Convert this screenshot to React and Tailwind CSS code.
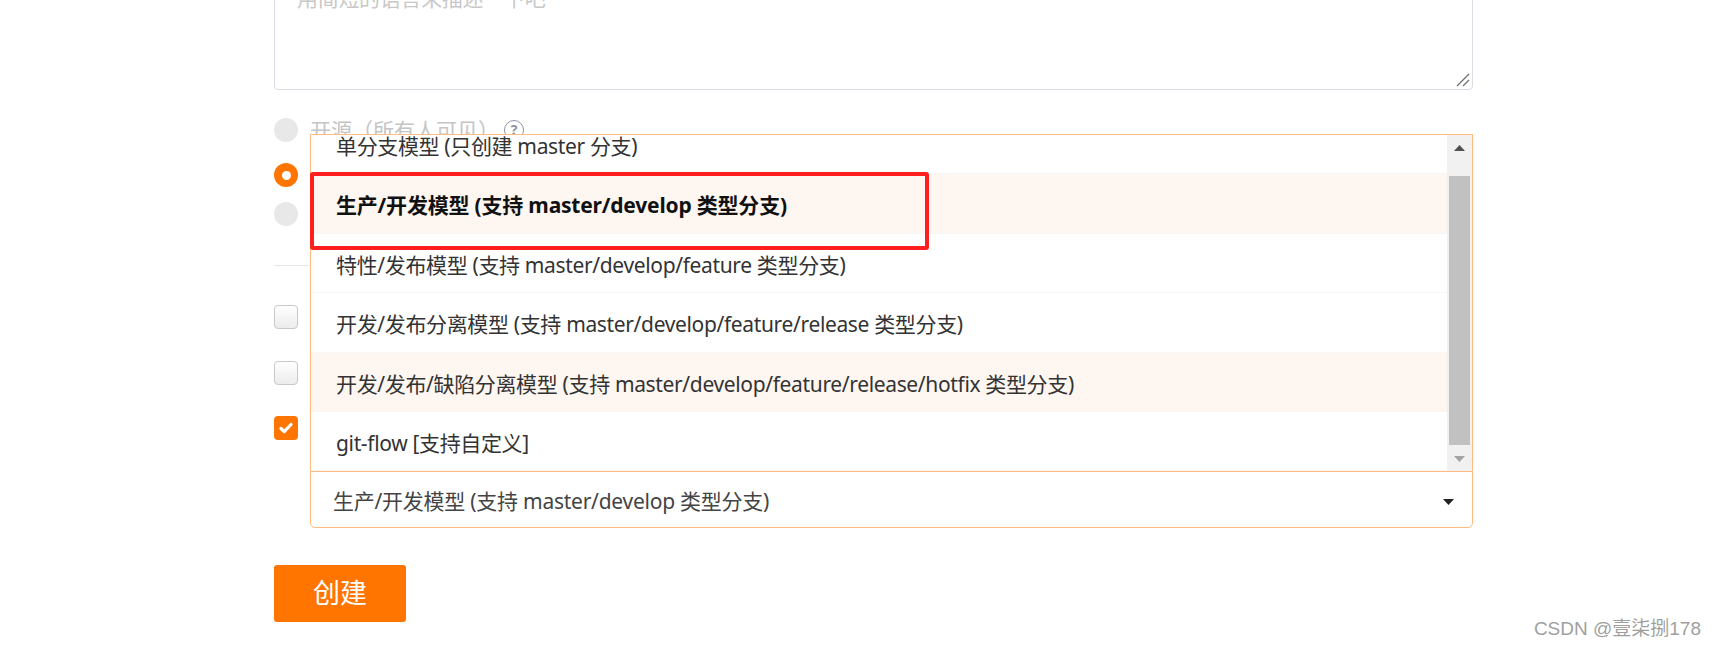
import React from 'react';

const options = [
  { label: '单分支模型 (只创建 master 分支)' },
  { label: '生产/开发模型 (支持 master/develop 类型分支)', active: true },
  { label: '特性/发布模型 (支持 master/develop/feature 类型分支)' },
  { label: '开发/发布分离模型 (支持 master/develop/feature/release 类型分支)' },
  { label: '开发/发布/缺陷分离模型 (支持 master/develop/feature/release/hotfix 类型分支)', tinted: true },
  { label: 'git-flow [支持自定义]' },
];

function Radio({ checked }) {
  if (checked) {
    return (
      <span className="flex h-6 w-6 shrink-0 items-center justify-center rounded-full bg-[#ff7500]">
        <span className="h-[9px] w-[9px] rounded-full bg-white" />
      </span>
    );
  }
  return <span className="h-6 w-6 shrink-0 rounded-full bg-[#e8e8e8]" />;
}

function Checkbox({ checked }) {
  if (checked) {
    return (
      <span className="flex h-6 w-6 shrink-0 items-center justify-center rounded-[4px] bg-[#ff7500]">
        <svg width="16" height="16" viewBox="0 0 16 16">
          <path d="M3 8.5l3.2 3.2L13 4.5" fill="none" stroke="#fff" strokeWidth="3.2" strokeLinecap="round" strokeLinejoin="round" />
        </svg>
      </span>
    );
  }
  return <span className="h-6 w-6 shrink-0 rounded-[4px] border border-[#c9c9c9] bg-gradient-to-b from-white to-[#ececec]" />;
}

function Triangle({ up, color }) {
  return (
    <svg width="11" height="6" viewBox="0 0 11 6">
      <path d={up ? 'M0 6L5.5 0L11 6Z' : 'M0 0L5.5 6L11 0Z'} fill={color} />
    </svg>
  );
}

export default function App() {
  return (
    <div className="relative h-[651px] w-full overflow-hidden bg-white font-[family-name:'Noto_Sans','Noto_Sans_CJK_SC',sans-serif]">
      <div className="ml-[274px] flex w-[1199px] flex-col">
        {/* Description textarea */}
        <div className="relative -mt-[40px] h-[130px] rounded-[4px] border border-[#dcdde4] pl-[22px] pt-[22px] text-[21px] leading-[30px] tracking-[-0.3px] text-[#c8c8c8]">
          用简短的语言来描述一下吧
          <svg className="absolute bottom-[2px] right-[2px]" width="14" height="14" viewBox="0 0 14 14">
            <path d="M1 13L13 1M7 13L13 7" stroke="#707070" strokeWidth="1.3" />
          </svg>
        </div>

        {/* Visibility */}
        <div className="mt-[28px] flex h-6 items-center">
          <Radio />
          <span className="ml-[12px] text-[21px] leading-6 text-[#c5c5c5]">开源（所有人可见）</span>
          <span className="ml-[5px] flex h-[20px] w-[20px] items-center justify-center rounded-full border-[1.5px] border-[#8e94a6] text-[14px] font-bold leading-none text-[#8e94a6]">?</span>
        </div>
        <div className="mt-[21px] flex h-6 items-center">
          <Radio checked />
          <span className="ml-[12px] text-[21px] leading-6 text-[#333]">私有（仅仓库成员可见）</span>
        </div>
        <div className="mt-[15px] flex h-6 items-center">
          <Radio />
          <span className="ml-[12px] text-[21px] leading-6 text-[#c5c5c5]">企业内部公开（仅企业成员可见）</span>
        </div>

        <div className="mt-[39px] h-px bg-[#e6e6e6]" />

        {/* Init options */}
        <div className="mt-[39px] flex h-6 items-center">
          <Checkbox />
          <span className="ml-[12px] text-[21px] leading-6 text-[#333]">使用Readme文件初始化这个仓库</span>
        </div>
        <div className="mt-[32px] flex h-6 items-center">
          <Checkbox />
          <span className="ml-[12px] text-[21px] leading-6 text-[#333]">选择 .gitignore 模板</span>
        </div>
        <div className="mt-[31px] flex h-6 items-center">
          <Checkbox checked />
          <span className="ml-[12px] text-[21px] leading-6 text-[#333]">选择分支模型</span>
        </div>

        {/* Branch model select */}
        <div className="ml-[36px] mt-[31px] flex h-[57px] items-center justify-between rounded-b-[5px] border border-[#ffbb80] pl-[22px] pr-[18px] pt-[4px]">
          <span className="text-[21px] tracking-[-0.25px] text-[#444]">生产/开发模型 (支持 master/develop 类型分支)</span>
          <Triangle color="#222" />
        </div>

        <button className="mt-[37px] flex h-[57px] w-[132px] items-center justify-center rounded-[3px] bg-[#ff7500] text-[27px] text-white">
          创建
        </button>
      </div>

      {/* Open dropdown list */}
      <div className="absolute left-[310px] top-[134px] flex h-[337px] w-[1163px] overflow-hidden border border-b-0 border-[#ffbb80] bg-white">
        <div className="flex-1 overflow-hidden">
          <div className="-mt-[20px] flex flex-col">
            {options.map((o) => (
              <div
                key={o.label}
                className={`flex h-[59.4px] shrink-0 items-center border-b border-[#f6f6f6] px-[25px] pt-[5px] text-[21px] ${
                  o.active
                    ? 'bg-[#fef6f1] font-bold tracking-[-0.2px] text-[#111]'
                    : o.tinted
                    ? 'bg-[#fef6f1] tracking-[-0.35px] text-[#333]'
                    : 'tracking-[-0.35px] text-[#333]'
                }`}
              >
                {o.label}
              </div>
            ))}
          </div>
        </div>
        <div className="flex w-[25px] flex-col bg-[#f1f1f1]">
          <div className="flex h-[25px] items-center justify-center">
            <Triangle up color="#505050" />
          </div>
          <div className="h-[16px]" />
          <div className="mx-[2px] h-[269px] bg-[#c1c1c1]" />
          <div className="flex-1" />
          <div className="flex h-[25px] items-center justify-center">
            <Triangle color="#a3a3a3" />
          </div>
        </div>
      </div>

      {/* Annotation */}
      <div className="absolute left-[310px] top-[172px] h-[78px] w-[619px] rounded-[3px] border-[4px] border-[#ff1f1f]" />

      <div className="absolute bottom-[8px] right-[14px] font-[family-name:'Liberation_Sans','Noto_Sans_CJK_SC',sans-serif] text-[19px] text-[#9f9f9f]">
        CSDN @壹柒捌178
      </div>
    </div>
  );
}
